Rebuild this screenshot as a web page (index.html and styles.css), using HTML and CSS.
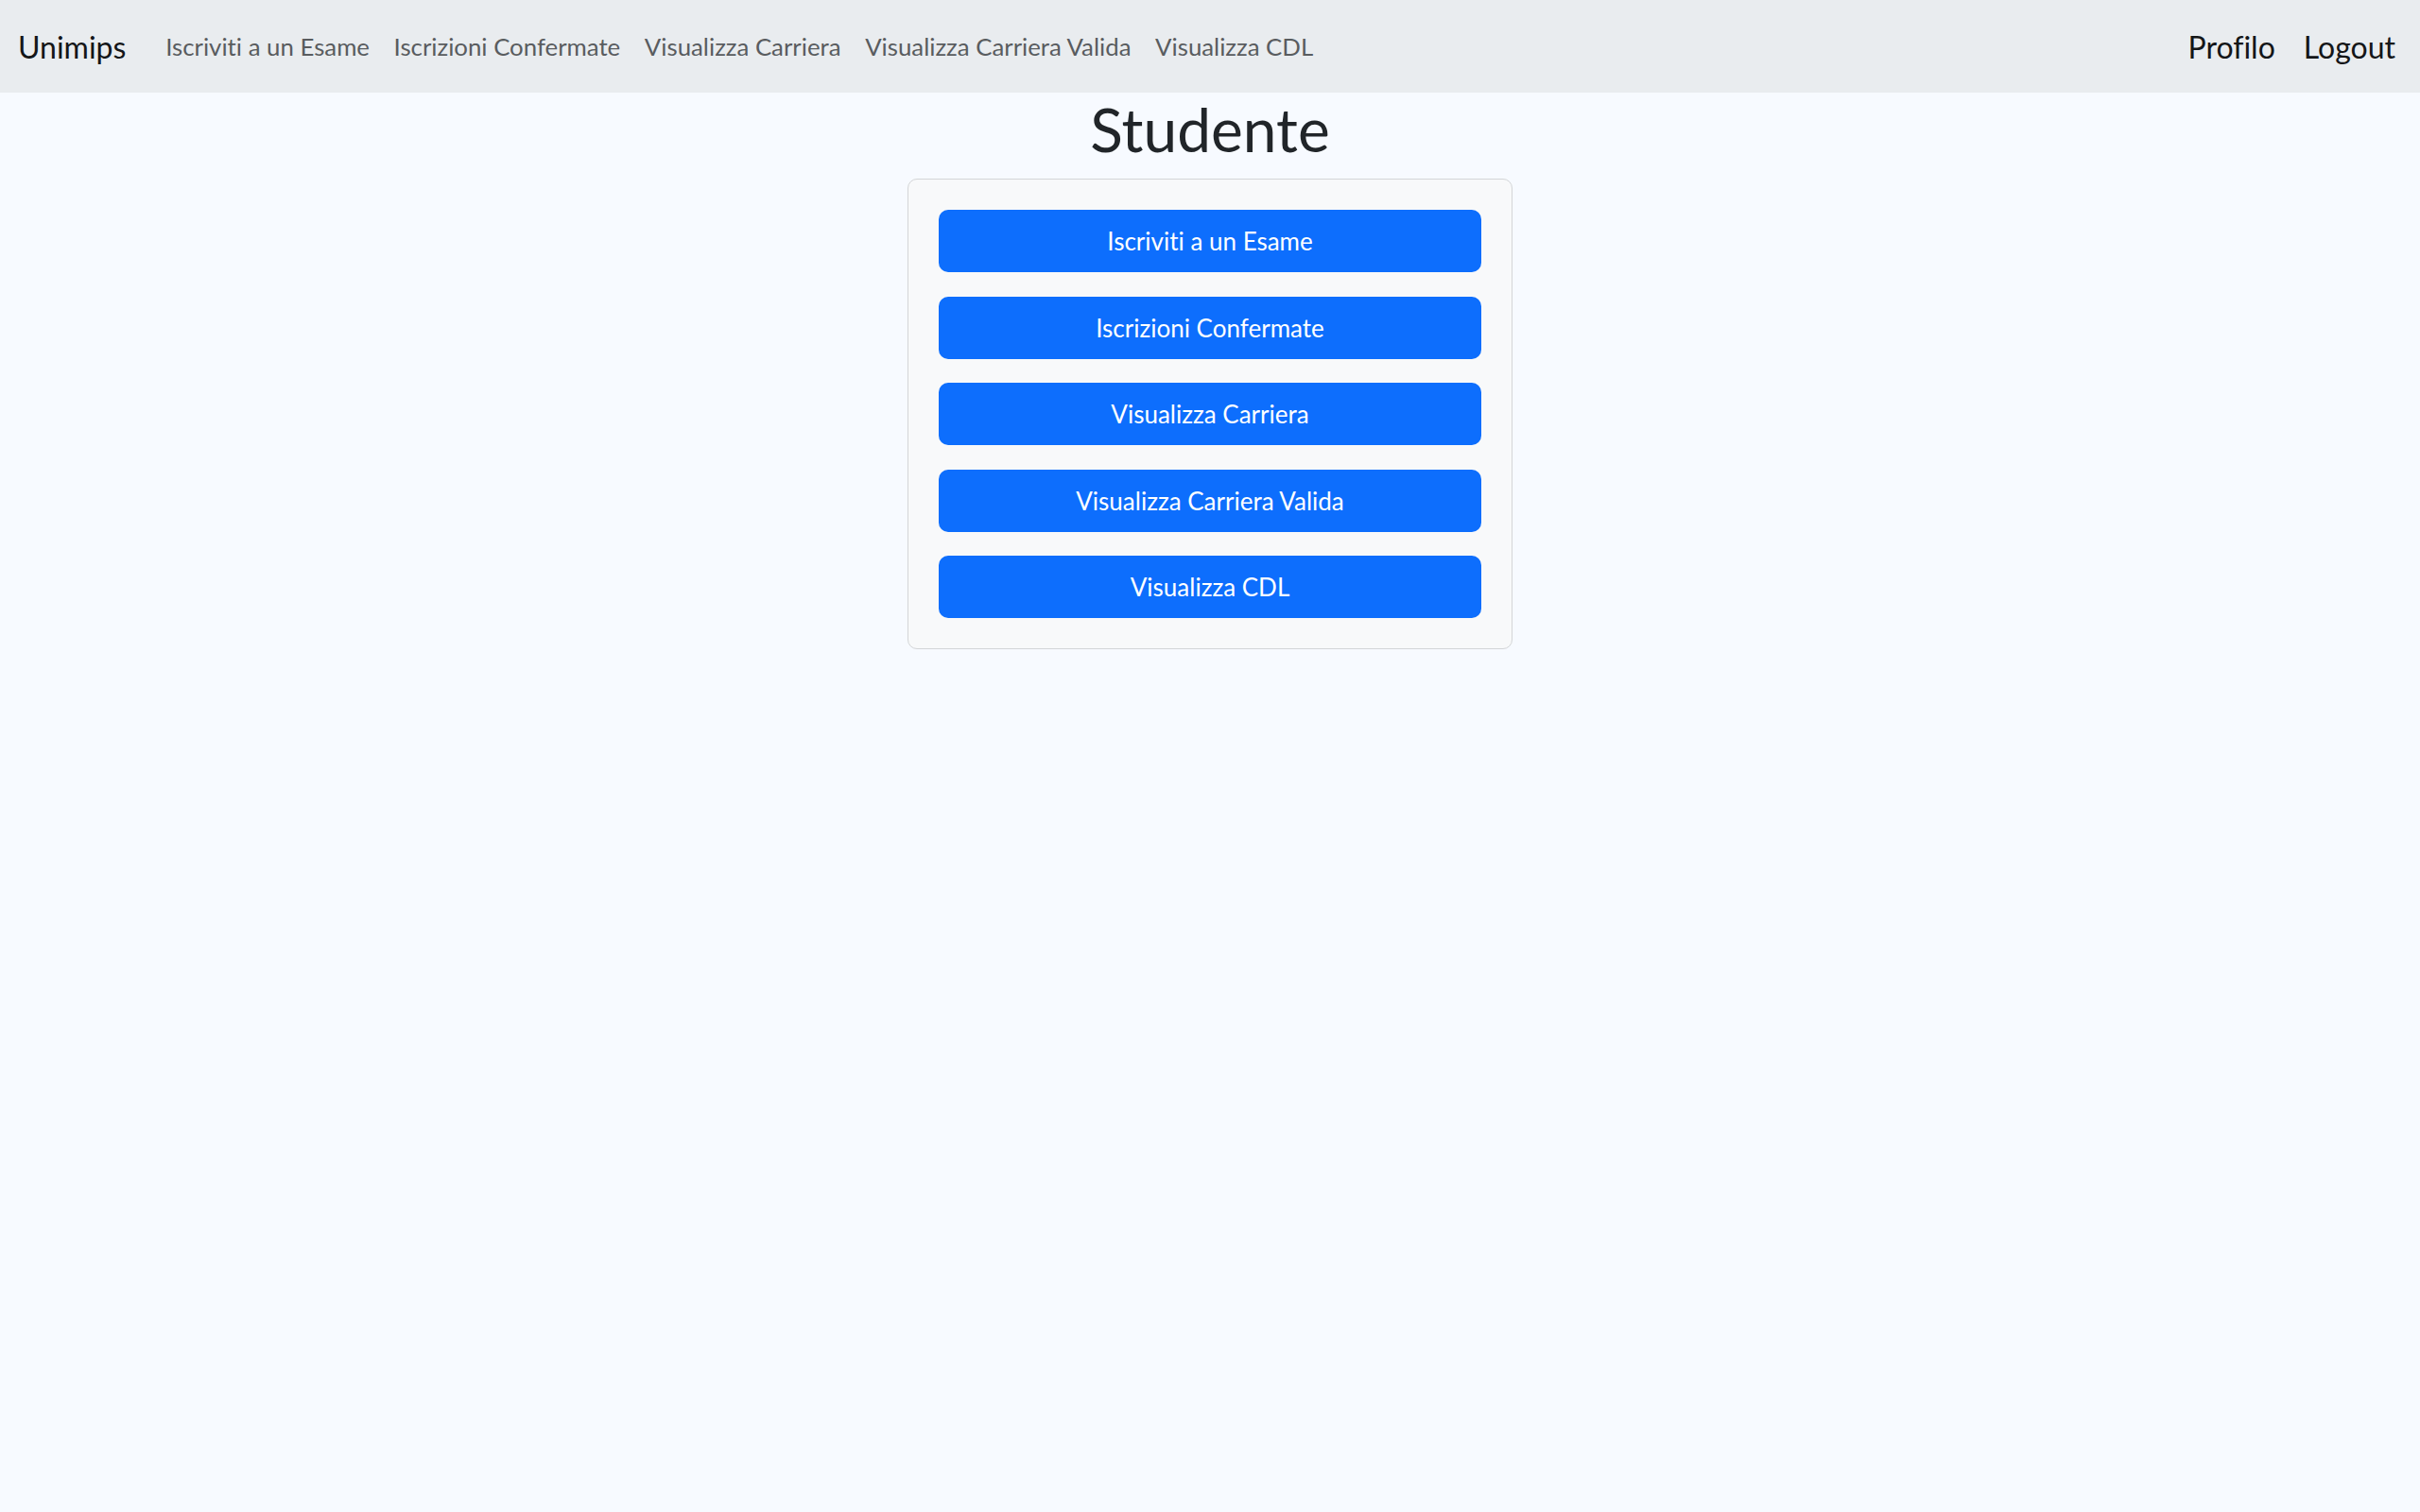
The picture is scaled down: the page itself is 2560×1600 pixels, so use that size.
FILE: index.html
```html
<!DOCTYPE html>
<html lang="it">
<head>
<meta charset="utf-8">
<title>Studente</title>
<link rel="stylesheet" href="styles.css">
</head>
<body>
<nav class="navbar">
  <a class="brand" href="#">Unimips</a>
  <ul class="nav-links">
    <li><a class="nav-link" href="#">Iscriviti a un Esame</a></li>
    <li><a class="nav-link" href="#">Iscrizioni Confermate</a></li>
    <li><a class="nav-link" href="#">Visualizza Carriera</a></li>
    <li><a class="nav-link" href="#">Visualizza Carriera Valida</a></li>
    <li><a class="nav-link" href="#">Visualizza CDL</a></li>
  </ul>
  <div class="nav-right">
    <a class="nav-strong" href="#">Profilo</a>
    <a class="nav-strong" href="#">Logout</a>
  </div>
</nav>
<main class="main">
  <h1 class="title">Studente</h1>
  <div class="card">
    <a class="btn" href="#">Iscriviti a un Esame</a>
    <a class="btn" href="#">Iscrizioni Confermate</a>
    <a class="btn" href="#">Visualizza Carriera</a>
    <a class="btn" href="#">Visualizza Carriera Valida</a>
    <a class="btn" href="#">Visualizza CDL</a>
  </div>
</main>
</body>
</html>
```
FILE: styles.css
```css
* { box-sizing: border-box; }
html, body { margin: 0; padding: 0; }
body {
  background: #f7faff;
  font-family: Lato, "Noto Sans", sans-serif;
  font-variant-ligatures: none;
  color: #212529;
  min-height: 1600px;
}
a { text-decoration: none; }
.navbar {
  height: 98px;
  background: #e9ecef;
  display: flex;
  align-items: center;
  padding: 0 26px 0 19px;
}
.brand {
  font-size: 32px;
  line-height: 48px;
  color: #141618;
  margin-right: 29px;
  padding-top: 2px;
}
.nav-links {
  list-style: none;
  margin: 0;
  padding: 0;
  display: flex;
}
.nav-link {
  display: block;
  font-size: 25.8px;
  line-height: 38px;
  padding: 0 12.8px;
  color: #595c5f;
}
.nav-right {
  margin-left: auto;
  display: flex;
  gap: 30px;
}
.nav-strong {
  font-size: 32px;
  line-height: 48px;
  color: #141618;
  padding-top: 2px;
}
.main {
  display: flex;
  flex-direction: column;
  align-items: center;
}
.title {
  margin: 0 0 14px;
  font-size: 64px;
  line-height: 77px;
  font-weight: 400;
  color: #212529;
}
.card {
  width: 640px;
  background: #f8f9fa;
  border: 1.5px solid #d3d5d7;
  border-radius: 10px;
  padding: 32px;
  display: flex;
  flex-direction: column;
  gap: 25.6px;
}
.btn {
  display: flex;
  align-items: center;
  justify-content: center;
  height: 66px;
  background: #0d6efd;
  color: #fff;
  border-radius: 10px;
  font-size: 26px;
}
```
